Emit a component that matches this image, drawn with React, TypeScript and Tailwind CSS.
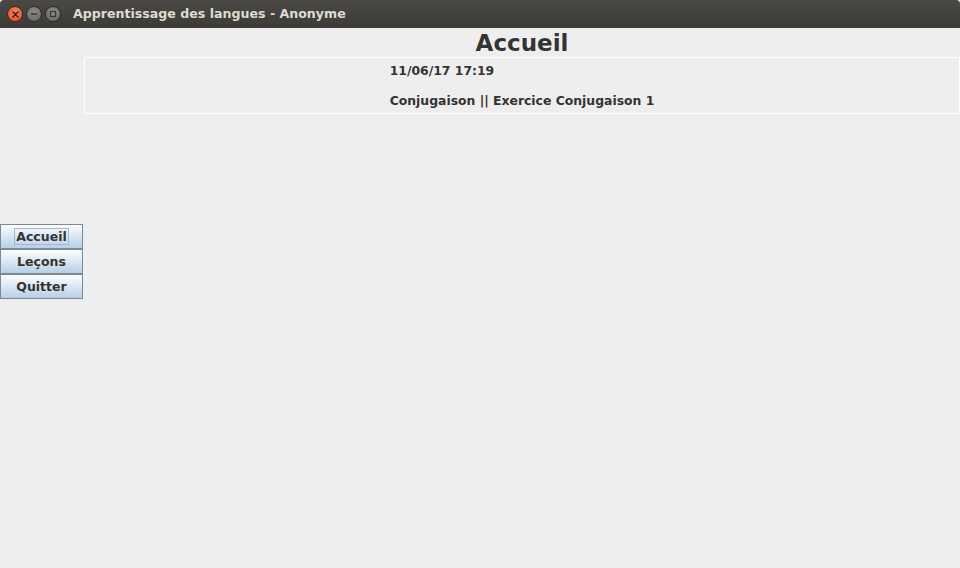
import React from "react";

function WinButton({ kind }: { kind: "close" | "min" | "max" }) {
  if (kind === "close") {
    return (
      <div className="w-[16px] h-[16px] rounded-full flex items-center justify-center border border-[#3a2a22] bg-[radial-gradient(circle_at_50%_35%,#f7825a,#e0501f)]">
        <svg width="7" height="7" viewBox="0 0 7 7">
          <path d="M1 1L6 6M6 1L1 6" stroke="#3a1a0e" strokeWidth="1.4" strokeLinecap="round" />
        </svg>
      </div>
    );
  }
  return (
    <div className="w-[16px] h-[16px] rounded-full flex items-center justify-center border border-[#2e2d2a] bg-[radial-gradient(circle_at_50%_35%,#8f8d88,#65625d)]">
      {kind === "min" ? (
        <svg width="8" height="8" viewBox="0 0 8 8">
          <path d="M1 4H7" stroke="#3a3935" strokeWidth="1.5" />
        </svg>
      ) : (
        <svg width="8" height="8" viewBox="0 0 8 8">
          <rect x="1.5" y="1.5" width="5" height="5" fill="none" stroke="#3a3935" strokeWidth="1.2" />
        </svg>
      )}
    </div>
  );
}

function NavButton({ label, focused }: { label: string; focused?: boolean }) {
  return (
    <div className="w-[83px] h-[25px] border border-[#7a8a99] bg-[linear-gradient(to_bottom,#ffffff_0%,#e4edf6_35%,#b8cfe5_100%)] flex items-center justify-center">
      <span
        className={
          "text-[12.5px] font-bold text-[#333333] leading-[15px] px-[1px] " +
          (focused ? "outline outline-1 outline-[#a3b8cc]" : "")
        }
      >
        {label}
      </span>
    </div>
  );
}

export default function App() {
  return (
    <div
      className="w-[960px] h-[568px] flex flex-col bg-[#eeeeee] overflow-hidden"
      style={{ fontFamily: '"DejaVu Sans", sans-serif' }}
    >
      <div className="h-[28px] shrink-0 flex items-center bg-[linear-gradient(to_bottom,#4a4944,#3c3b37)] rounded-t-[4px]">
        <div className="flex items-center gap-[3px] pl-[7px]">
          <WinButton kind="close" />
          <WinButton kind="min" />
          <WinButton kind="max" />
        </div>
        <span className="ml-[12px] text-[12.6px] font-bold text-[#dfdbd2]">
          Apprentissage des langues - Anonyme
        </span>
      </div>
      <div className="flex flex-1 text-[#333333]">
        <div className="w-[84px] shrink-0 flex flex-col pt-[196px]">
          <NavButton label="Accueil" focused />
          <NavButton label="Leçons" />
          <NavButton label="Quitter" />
        </div>
        <div className="flex-1 flex flex-col">
          <div className="h-[29px] flex items-center justify-center">
            <span className="text-[23px] font-bold leading-[28px] text-[#333333]">Accueil</span>
          </div>
          <div className="h-[57px] border border-white flex justify-center">
            <div className="flex flex-col text-[12.4px] font-bold leading-[15px] pt-[5px]">
              <span>11/06/17 17:19</span>
              <span className="mt-[15px]">Conjugaison || Exercice Conjugaison 1</span>
            </div>
          </div>
        </div>
      </div>
    </div>
  );
}
